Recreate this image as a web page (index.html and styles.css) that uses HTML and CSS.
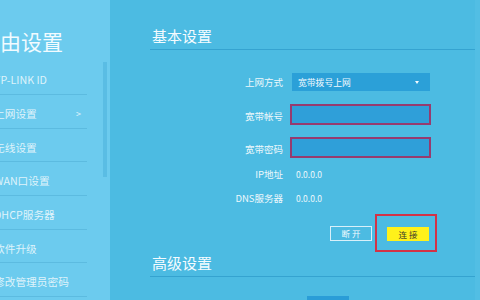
FILE: index.html
```html
<!DOCTYPE html>
<html lang="zh-CN">
<head>
<meta charset="utf-8">
<title>路由设置</title>
<link rel="stylesheet" href="styles.css">
</head>
<body>
<div class="page">
  <aside class="sidebar">
    <div class="side-col">
      <div class="side-title">路由设置</div>
      <ul class="menu">
        <li class="menu-item">TP-LINK ID</li>
        <li class="menu-item"><span>上网设置</span><span class="chev">&gt;</span></li>
        <li class="menu-item">无线设置</li>
        <li class="menu-item">WAN口设置</li>
        <li class="menu-item">DHCP服务器</li>
        <li class="menu-item">软件升级</li>
        <li class="menu-item">修改管理员密码</li>
      </ul>
    </div>
    <div class="scroll-track"><div class="scroll-thumb"></div></div>
  </aside>
  <main class="main">
    <h2 class="section-title">基本设置</h2>
    <div class="form">
      <div class="row row-select">
        <label class="lbl">上网方式</label>
        <div class="select"><span>宽带拨号上网</span><span class="caret"></span></div>
      </div>
      <div class="row row-input">
        <label class="lbl">宽带帐号</label>
        <div class="input"></div>
      </div>
      <div class="row row-input row-pass">
        <label class="lbl">宽带密码</label>
        <div class="input"></div>
      </div>
      <div class="row row-info">
        <label class="lbl">IP地址</label>
        <span class="val">0.0.0.0</span>
      </div>
      <div class="row row-info">
        <label class="lbl">DNS服务器</label>
        <span class="val">0.0.0.0</span>
      </div>
      <div class="btn-row">
        <button class="btn btn-ghost">断 开</button>
        <div class="highlight"><button class="btn btn-yellow">连 接</button></div>
      </div>
    </div>
    <h2 class="section-title section-adv">高级设置</h2>
    <div class="peek"></div>
  </main>
  <div class="edge"></div>
</div>
</body>
</html>
```

FILE: styles.css
```css
* { box-sizing: border-box; }
html, body { margin: 0; padding: 0; }
body {
  width: 480px;
  height: 300px;
  overflow: hidden;
  font-family: "Noto Sans CJK SC", "Noto Sans", sans-serif;
  background: #4cbbe2;
}
.page {
  display: flex;
  height: 300px;
}
.sidebar {
  width: 110px;
  flex: none;
  background: #6ccbee;
  display: flex;
  overflow: hidden;
}
.side-col {
  width: 103px;
  flex: none;
}
.side-title {
  margin: 26px 0 0 -21px;
  height: 30px;
  line-height: 30px;
  font-size: 21px;
  color: #f2fbff;
  white-space: nowrap;
}
.menu {
  list-style: none;
  margin: 5.3px 0 0 0;
  padding: 0;
  width: 87px;
}
.menu-item {
  height: 33.7px;
  padding: 4px 6px 0 0;
  margin-left: -6px;
  border-bottom: 1px solid #5cbbe0;
  display: flex;
  align-items: center;
  justify-content: space-between;
  font-size: 10.7px;
  color: #dff3fb;
  white-space: nowrap;
}
.chev { font-size: 9px; color: #e4f5fc; }
.scroll-track {
  width: 4px;
  flex: none;
}
.scroll-thumb {
  margin-top: 62px;
  height: 115px;
  background: #5abde4;
}
.main {
  flex: 1;
  padding: 0 0 0 40px;
  min-width: 0;
}
.edge {
  width: 5px;
  flex: none;
  background: #52bee4;
}
.section-title {
  margin: 26px 0 0 0;
  padding: 0 0 3px 2px;
  height: 24px;
  line-height: 20px;
  font-size: 15px;
  font-weight: normal;
  color: #f4fbff;
  border-bottom: 1px solid #35a3d0;
}
.section-adv { margin-top: 1px; }
.form { display: flex; flex-direction: column; }
.row {
  display: grid;
  grid-template-columns: 133px 139px;
  column-gap: 8px;
  align-items: center;
}
.lbl {
  text-align: right;
  font-size: 9.5px;
  color: #eef8fc;
  white-space: nowrap;
}
.row-select { margin-top: 23px; height: 18px; }
.select {
  height: 18px;
  margin-left: 1px;
  background: #2ba0d8;
  display: flex;
  align-items: center;
  justify-content: space-between;
  padding: 0 11px 0 6px;
  font-size: 8.8px;
  color: #f2faff;
}
.caret {
  width: 0;
  height: 0;
  border-left: 2.5px solid transparent;
  border-right: 2.5px solid transparent;
  border-top: 3px solid #f2faff;
}
.row-input { margin-top: 13px; height: 21px; }
.row-pass { margin-top: 12px; }
.row-input .lbl { position: relative; top: 1px; }
.input {
  height: 21px;
  margin-left: -1px;
  width: 141px;
  background: #2f9fd9;
  border: 2px solid #963b6f;
}
.row-info { margin-top: 8px; height: 16px; }
.val {
  padding-left: 5px;
  font-size: 8.5px;
  color: #eef8fc;
}
.btn-row {
  margin-top: 8px;
  padding-left: 180px;
  display: flex;
  align-items: flex-start;
  gap: 3px;
}
.btn {
  font-family: inherit;
  width: 42px;
  height: 15px;
  padding: 0;
  font-size: 8.5px;
  line-height: 13px;
  cursor: pointer;
}
.btn-ghost {
  margin-top: 12px;
  background: transparent;
  border: 1px solid #d8f0fa;
  color: #f2faff;
}
.highlight {
  width: 62px;
  height: 38px;
  border: 2px solid #d23246;
  padding: 11px 6px 0 10px;
}
.btn-yellow {
  display: block;
  background: #fff11a;
  border: none;
  color: #3a3a2a;
  height: 14px;
}
.peek {
  margin: 19px 0 0 157px;
  width: 42px;
  height: 10px;
  background: #2a9dd7;
}
```
